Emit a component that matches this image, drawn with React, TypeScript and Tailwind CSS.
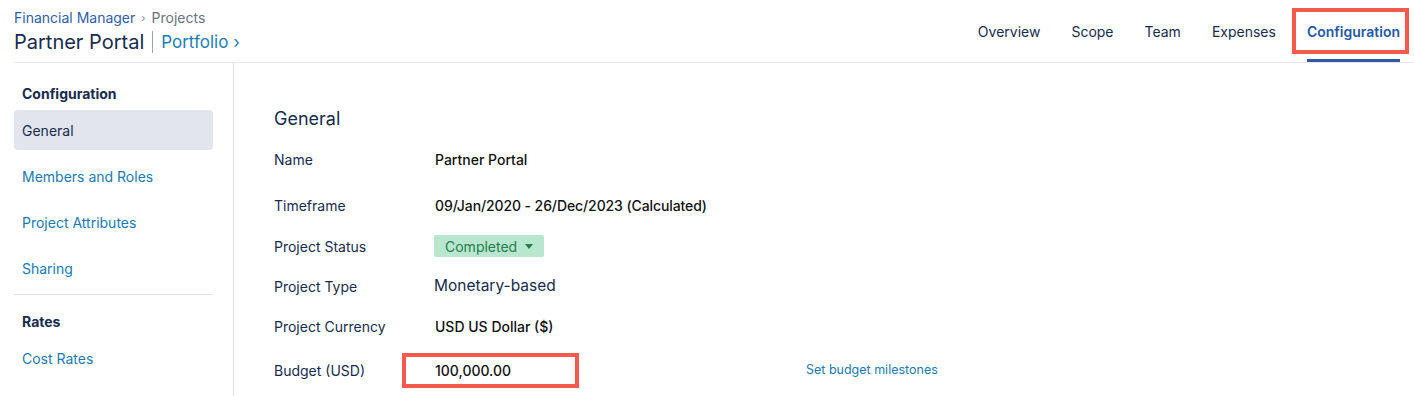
import React from "react";

const font = { fontFamily: "Inter, 'Noto Sans', sans-serif" };

function SideItem({ label, active }: { label: string; active?: boolean }) {
  return (
    <div
      className={`h-[40px] mt-[6px] flex items-center px-[8px] rounded-[4px] text-[14px] ${
        active ? "bg-[#e2e5ee] text-[#172b4d]" : "text-[#1a7ab0]"
      }`}
    >
      {label}
    </div>
  );
}

function Row({ label, mt, children }: { label: string; mt: string; children: React.ReactNode }) {
  return (
    <div className={`flex items-center h-[40px] ${mt}`}>
      <div className="w-[161px] text-[14px] text-[#172b4d]">{label}</div>
      {children}
    </div>
  );
}

export default function App() {
  const tabs = ["Overview", "Scope", "Team", "Expenses"];
  return (
    <div className="w-[1414px] h-[396px] bg-white overflow-hidden" style={font}>
      {/* Header */}
      <div className="ml-[14px] h-[63px] border-b border-[#e6e8f0] flex justify-between">
        <div className="pt-[8px]">
          <div className="flex items-center text-[14px] leading-[20px]">
            <span className="text-[#2f5ea8]">Financial Manager</span>
            <span className="text-[#8a8f99] text-[11px] mx-[6px]">›</span>
            <span className="text-[#6b7280]">Projects</span>
          </div>
          <div className="flex items-center mt-[1px] h-[26px]">
            <span className="text-[20px] text-[#172b4d] leading-[26px]">Partner Portal</span>
            <span className="w-px h-[22px] bg-[#a0a4ab] mx-[8px]" />
            <span className="text-[17px] text-[#1a7db5] leading-[26px]">Portfolio ›</span>
          </div>
        </div>
        <div className="flex pr-[14px] gap-[31px] text-[14px]">
          {tabs.map((t) => (
            <div key={t} className="flex items-center h-full text-[#172b4d]">
              {t}
            </div>
          ))}
          <div className="relative flex items-center h-full text-[#2558a4] font-semibold">
            Configuration
            <div className="absolute left-0 right-0 bottom-0 h-[3px] bg-[#2b5aa3]" />
            <div className="absolute left-[-15px] right-[-9px] top-[8px] bottom-[8px] border-[4px] border-[#f45b4c]" />
          </div>
        </div>
      </div>

      <div className="flex h-[333px]">
        {/* Sidebar */}
        <div className="w-[234px] shrink-0 border-r border-[#dcdee3] pl-[14px] pr-[20px] pt-[21px]">
          <div className="px-[8px] h-[20px] leading-[20px] text-[14px] font-bold text-[#172b4d] mb-[3px]">
            Configuration
          </div>
          <SideItem label="General" active />
          <SideItem label="Members and Roles" />
          <SideItem label="Project Attributes" />
          <SideItem label="Sharing" />
          <div className="h-px bg-[#dfe1e6] mt-[6px]" />
          <div className="px-[8px] h-[20px] leading-[20px] text-[14px] font-bold text-[#172b4d] mt-[17px] mb-[6px]">
            Rates
          </div>
          <SideItem label="Cost Rates" />
        </div>

        {/* Main */}
        <div className="flex-1 pl-[40px] pt-[44px]">
          <div className="text-[18px] leading-[24px] text-[#172b4d]">General</div>
          <Row label="Name" mt="mt-[8px]">
            <span className="text-[14px] font-medium text-[#111]">Partner Portal</span>
          </Row>
          <Row label="Timeframe" mt="mt-[6px]">
            <span className="text-[14px] font-medium text-[#111] tracking-[-0.1px]">
              09/Jan/2020 - 26/Dec/2023 (Calculated)
            </span>
          </Row>
          <Row label="Project Status" mt="mt-[1px]">
            <div className="-ml-px h-[22px] w-[110px] bg-[#b9e6cf] rounded-[2px] flex items-center pl-[11px] text-[14px] text-[#1e7d4b]">
              Completed
              <svg width="8" height="5" viewBox="0 0 8 5" className="ml-[8px]">
                <path d="M0 0 L8 0 L4 5 Z" fill="#1e7d4b" />
              </svg>
            </div>
          </Row>
          <Row label="Project Type" mt="mt-0">
            <span className="-ml-px text-[15.5px] text-[#172b4d]">Monetary-based</span>
          </Row>
          <Row label="Project Currency" mt="mt-0">
            <span className="text-[14px] font-medium text-[#111]">USD US Dollar ($)</span>
          </Row>
          <div className="flex items-center h-[40px] mt-[4px]">
            <div className="w-[128px] text-[14px] text-[#172b4d]">Budget (USD)</div>
            <div className="w-[177px] h-[35px] border-[4px] border-[#f45b4c] flex items-center pl-[29px] text-[14px] font-medium text-[#111]">
              100,000.00
            </div>
            <span className="ml-[227px] text-[12.5px] text-[#1a7ab0]">Set budget milestones</span>
          </div>
        </div>
      </div>
    </div>
  );
}
